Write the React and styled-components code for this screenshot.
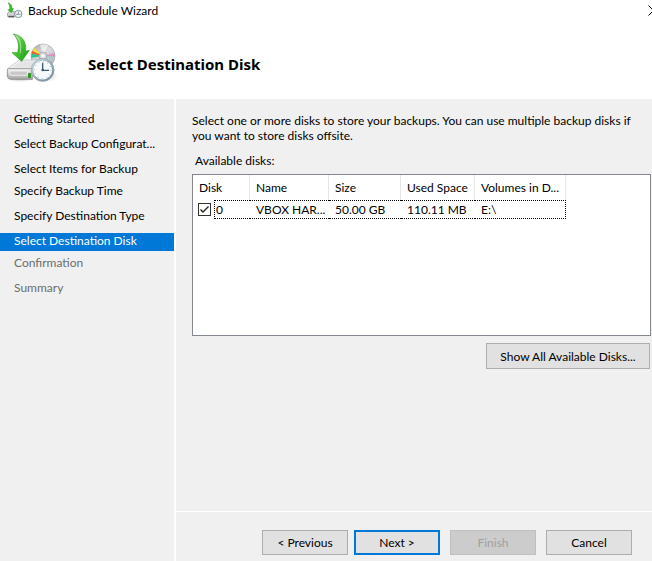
import React, { useState } from "react";
import styled, { createGlobalStyle } from "styled-components";

const GlobalStyle = createGlobalStyle`
	* {
		box-sizing: border-box;
	}
	body {
		margin: 0;
		background: #f0f0f0;
		color: #000000;
		font-family: Lato, "Open Sans", sans-serif;
		font-size: 12px;
		line-height: 15px;
	}
`;

const Window = styled.div`
	display: flex;
	flex-direction: column;
	min-height: 100vh;
	overflow: hidden;
`;

const TitleBar = styled.div`
	display: flex;
	align-items: center;
	height: 20px;
	padding-left: 7px;
	background: #ffffff;
`;

const TitleText = styled.span`
	flex: 1;
	margin-left: 5px;
`;

const CloseButton = styled.button`
	display: flex;
	width: 4px;
	padding: 0;
	border: none;
	background: none;
	overflow: hidden;
	svg {
		flex-shrink: 0;
	}
`;

const Header = styled.header`
	display: flex;
	align-items: center;
	height: 79px;
	padding: 0 6px 4px;
	background: #ffffff;
`;

const Heading = styled.h1`
	margin: 0 0 0 30px;
	padding-top: 12px;
	font-family: "Noto Sans", "Open Sans", sans-serif;
	font-size: 15px;
	line-height: 20px;
	font-weight: 700;
`;

const Body = styled.div`
	display: flex;
	flex: 1;
`;

const Sidebar = styled.nav`
	width: 176px;
	flex-shrink: 0;
	padding-top: 12px;
	border-right: 2px solid #ffffff;
`;

const Step = styled.a`
	display: block;
	height: 18px;
	margin-bottom: ${(props) => (props.$tight ? "4px" : "7px")};
	padding-left: 14px;
	line-height: 16px;
	text-decoration: none;
	color: ${(props) =>
		props.$active ? "#ffffff" : props.$pending ? "#6d6d6d" : "#000000"};
	background: ${(props) => (props.$active ? "#0078d7" : "transparent")};
`;

const Main = styled.main`
	display: flex;
	flex: 1;
	flex-direction: column;
	min-width: 0;
`;

const Content = styled.section`
	flex: 1;
	padding: 14px 1px 0 16px;
`;

const Intro = styled.p`
	margin: 0 14px 10px 0;
`;

const ListLabel = styled.div`
	padding-left: 3px;
	margin-bottom: 6px;
`;

const DiskList = styled.div`
	height: 162px;
	border: 1px solid #828790;
	background: #ffffff;
`;

const Table = styled.table`
	width: 373px;
	table-layout: fixed;
	border-spacing: 0;
`;

const HeadCell = styled.th`
	height: 25px;
	padding: 0 6px;
	border-right: 1px solid #e5e5e5;
	font-weight: 400;
	text-align: left;
	white-space: nowrap;
`;

const Cell = styled.td`
	height: 19px;
	padding: 0 6px;
	border: 0 dotted #000000;
	border-width: ${(props) => (props.$last ? "1px 1px 1px 0" : "1px 0")};
	overflow: hidden;
	white-space: nowrap;
`;

const CheckCell = styled.td`
	height: 19px;
	padding: 0 0 0 5px;
`;

const CheckLabel = styled.label`
	display: flex;
	align-items: center;
`;

const CheckWrap = styled.span`
	position: relative;
	display: flex;
	margin-right: 3px;
	svg {
		position: absolute;
		top: 0;
		left: 0;
		pointer-events: none;
	}
`;

const CheckBox = styled.input`
	appearance: none;
	width: 13px;
	height: 13px;
	margin: 0;
	border: 1px solid #333333;
	background: #ffffff;
`;

const DiskNumber = styled.span`
	flex: 1;
	height: 19px;
	padding-left: 1px;
	line-height: 17px;
	border: 1px dotted #000000;
	border-right: none;
`;

const Button = styled.button`
	width: ${(props) => props.$width || "86px"};
	height: ${(props) => props.$height || "25px"};
	padding: 0;
	border: ${(props) =>
		props.$primary ? "2px solid #0078d7" : "1px solid #adadad"};
	background: #e1e1e1;
	color: #000000;
	font: inherit;
	white-space: nowrap;
	&:disabled {
		border-color: #bfbfbf;
		background: #cccccc;
		color: #a0a0a0;
	}
`;

const ListActions = styled.div`
	display: flex;
	justify-content: flex-end;
	padding: 7px 1px 0 0;
`;

const Footer = styled.footer`
	display: flex;
	justify-content: flex-end;
	gap: 10px;
	height: 50px;
	padding: 18px 20px 0 0;
	border-top: 1px solid #ffffff;
`;

const StepButtons = styled.div`
	display: flex;
	gap: 6px;
`;

const steps = [
	{ name: "Getting Started" },
	{ name: "Select Backup Configurat..." },
	{ name: "Select Items for Backup", tight: true },
	{ name: "Specify Backup Time" },
	{ name: "Specify Destination Type" },
	{ name: "Select Destination Disk", tight: true, active: true },
	{ name: "Confirmation", pending: true },
	{ name: "Summary", pending: true },
];

const columns = [
	{ name: "Disk", width: 57 },
	{ name: "Name", width: 79 },
	{ name: "Size", width: 72 },
	{ name: "Used Space", width: 74 },
	{ name: "Volumes in D...", width: 91 },
];

const SmallIcon = () => (
	<svg width="16" height="16" viewBox="21 3 48 48" aria-hidden="true">
		<path d="M22 37 L29 31 H43 V49 H26 L22 45 Z" fill="#d5d5d5" stroke="#858585" strokeWidth="2" />
		<path d="M25 46 H42" stroke="#444444" strokeWidth="3" />
		<path d="M24 5 C33 7 37 14 36 23 L41 22 L34 35 L23 26 L29 25 C30 17 28 11 24 5 Z" fill="#3cb82e" stroke="#22911c" strokeWidth="1" />
		<circle cx="55" cy="39" r="11" fill="#eef3f6" stroke="#8798a3" strokeWidth="3" />
		<path d="M55 31 V40 H62 M48 40 H55" fill="none" stroke="#5b7181" strokeWidth="2" />
	</svg>
);

const BackupIcon = () => (
	<svg width="52" height="50" viewBox="18 12 156 150" aria-hidden="true">
		<defs>
			<linearGradient id="arrow" x1="0" y1="0" x2="1" y2="1">
				<stop offset="0" stopColor="#b9e8a6" />
				<stop offset="0.45" stopColor="#46c332" />
				<stop offset="1" stopColor="#1d9a19" />
			</linearGradient>
			<linearGradient id="disc" x1="0" y1="0" x2="1" y2="1">
				<stop offset="0" stopColor="#a9a9ad" />
				<stop offset="0.5" stopColor="#dcdce0" />
				<stop offset="1" stopColor="#a6a6ae" />
			</linearGradient>
			<linearGradient id="drive" x1="0" y1="0" x2="0" y2="1">
				<stop offset="0" stopColor="#f4f4f4" />
				<stop offset="1" stopColor="#a4a4a4" />
			</linearGradient>
			<linearGradient id="rim" x1="0" y1="0" x2="1" y2="1">
				<stop offset="0" stopColor="#c5d5df" />
				<stop offset="1" stopColor="#6f8797" />
			</linearGradient>
			<radialGradient id="shade">
				<stop offset="0" stopColor="#000000" stopOpacity="0.2" />
				<stop offset="1" stopColor="#000000" stopOpacity="0" />
			</radialGradient>
		</defs>
		<ellipse cx="140" cy="142" rx="34" ry="17" fill="url(#shade)" />
		<ellipse cx="60" cy="151" rx="42" ry="8" fill="url(#shade)" />
		<circle cx="129" cy="81" r="36" fill="url(#disc)" stroke="#a0a0a6" strokeWidth="2" />
		<path d="M129 81 L97 66 A36 36 0 0 1 103 57 Z" fill="#f6dc42" />
		<path d="M129 81 L95 74 A36 36 0 0 1 97 66 Z" fill="#ed5d2c" />
		<path d="M129 81 L94 86 A36 36 0 0 1 95 74 Z" fill="#28c78a" />
		<path d="M129 81 L120 47 A36 36 0 0 1 145 49 Z" fill="#ffffff" opacity="0.6" />
		<path d="M129 81 L163 73 A36 36 0 0 1 164 83 Z" fill="#dd8fbd" />
		<path d="M129 81 L164 83 A36 36 0 0 1 162 93 Z" fill="#a0d0c4" />
		<circle cx="129" cy="81" r="12" fill="#d4d4d9" stroke="#96969d" strokeWidth="2" />
		<circle cx="129" cy="81" r="5" fill="#ffffff" />
		<path d="M23 119 L58 93 H112 L97 121 Z" fill="#f4f4f4" stroke="#b6b6b6" strokeWidth="2" />
		<path d="M34 116 L62 97 H103 L92 116 Z" fill="#e4e4e4" />
		<path d="M25 119 H97 V151 H31 Q23 150 22 142 V124 Q22 119 25 119 Z" fill="url(#drive)" stroke="#777777" strokeWidth="2" />
		<path d="M29 126 H82 V139 H34 Q29 138 29 134 Z" fill="#c8c8c8" stroke="#ffffff" strokeWidth="2" />
		<rect x="84" y="132" width="9" height="15" rx="2" fill="#269c1b" />
		<path d="M40 15 C63 19 80 34 77 67 L88 64 L65 97 L36 71 L53 71 C58 51 56 31 40 15 Z" fill="url(#arrow)" stroke="#2b9e23" strokeWidth="2" />
		<path d="M49 21 C63 36 64 51 60 73" fill="none" stroke="#d0f3c4" strokeWidth="3" opacity="0.7" />
		<circle cx="128" cy="123" r="34" fill="#f5f9fb" stroke="#5f7482" strokeWidth="2" />
		<circle cx="128" cy="123" r="31" fill="none" stroke="url(#rim)" strokeWidth="5" />
		<circle cx="128" cy="123" r="25" fill="none" stroke="#809cae" strokeWidth="3" strokeDasharray="2 11.1" />
		<path d="M128 101 V124 H147" fill="none" stroke="#3c5c75" strokeWidth="4" />
		<circle cx="128" cy="123" r="4" fill="#3c5c75" />
	</svg>
);

const CloseIcon = () => (
	<svg width="11" height="11" viewBox="0 0 11 11" aria-hidden="true">
		<path d="M0.5 0.5 L10.5 10.5 M10.5 0.5 L0.5 10.5" stroke="#000000" fill="none" />
	</svg>
);

const CheckMark = () => (
	<svg width="13" height="13" viewBox="0 0 13 13" aria-hidden="true">
		<path d="M2.5 6.5 L5 9 L10.5 3.5" fill="none" stroke="#222222" strokeWidth="1.4" />
	</svg>
);

const DiskTable = () => {
	const [checked, setChecked] = useState(true);
	return (
		<Table aria-labelledby="disks-label">
			<colgroup>
				{columns.map((col) => (
					<col key={col.name} width={col.width} />
				))}
			</colgroup>
			<thead>
				<tr>
					{columns.map((col) => (
						<HeadCell key={col.name}>{col.name}</HeadCell>
					))}
				</tr>
			</thead>
			<tbody>
				<tr>
					<CheckCell>
						<CheckLabel>
							<CheckWrap>
								<CheckBox
									type="checkbox"
									checked={checked}
									onChange={(e) => setChecked(e.target.checked)}
								/>
								{checked && <CheckMark />}
							</CheckWrap>
							<DiskNumber>0</DiskNumber>
						</CheckLabel>
					</CheckCell>
					<Cell>VBOX HAR...</Cell>
					<Cell>50.00 GB</Cell>
					<Cell>110.11 MB</Cell>
					<Cell $last>E:\</Cell>
				</tr>
			</tbody>
		</Table>
	);
};

const App = () => {
	return (
		<Window>
			<GlobalStyle />
			<TitleBar>
				<SmallIcon />
				<TitleText>Backup Schedule Wizard</TitleText>
				<CloseButton aria-label="Close">
					<CloseIcon />
				</CloseButton>
			</TitleBar>
			<Header>
				<BackupIcon />
				<Heading>Select Destination Disk</Heading>
			</Header>
			<Body>
				<Sidebar>
					{steps.map((step) => (
						<Step
							key={step.name}
							href="#"
							$tight={step.tight}
							$active={step.active}
							$pending={step.pending}
						>
							{step.name}
						</Step>
					))}
				</Sidebar>
				<Main>
					<Content>
						<Intro>
							Select one or more disks to store your backups. You can use
							multiple backup disks if you want to store disks offsite.
						</Intro>
						<ListLabel id="disks-label">Available disks:</ListLabel>
						<DiskList>
							<DiskTable />
						</DiskList>
						<ListActions>
							<Button $width="164px" $height="26px">
								Show All Available Disks...
							</Button>
						</ListActions>
					</Content>
					<Footer>
						<StepButtons>
							<Button>&lt; Previous</Button>
							<Button $primary>Next &gt;</Button>
						</StepButtons>
						<Button disabled>Finish</Button>
						<Button>Cancel</Button>
					</Footer>
				</Main>
			</Body>
		</Window>
	);
};

export default App;
